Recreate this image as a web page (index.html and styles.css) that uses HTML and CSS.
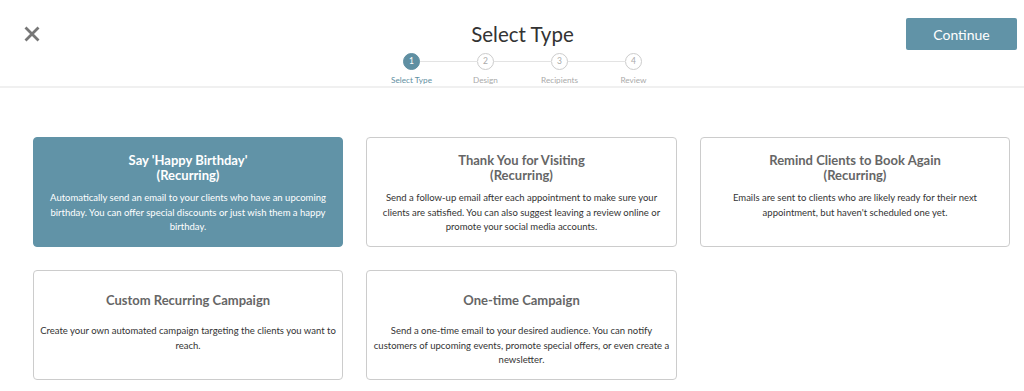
FILE: index.html
```html
<!DOCTYPE html>
<html>
   <head>
      <meta charset="UTF-8">
      <meta name="viewport" content="width=device-width, initial-scale=1.0"/>
      <title>Select Type</title>
      <link rel="stylesheet" href="styles.css">
   </head>
   <body>
      <header class="top-bar">
         <button class="close-button" aria-label="Close">
            <svg width="16" height="16" viewBox="0 0 16 16">
               <path d="M1.5 1.5 L14.5 14.5 M14.5 1.5 L1.5 14.5" stroke="#777" stroke-width="2.8" stroke-linecap="butt"/>
            </svg>
         </button>

         <div class="title-block">
            <h1>Select Type</h1>
            <ol class="steps">
               <li class="step active"><span class="step-num">1</span><span class="step-label">Select Type</span></li>
               <li class="step"><span class="step-num">2</span><span class="step-label">Design</span></li>
               <li class="step"><span class="step-num">3</span><span class="step-label">Recipients</span></li>
               <li class="step"><span class="step-num">4</span><span class="step-label">Review</span></li>
            </ol>
         </div>

         <button class="continue-button">Continue</button>
      </header>

      <main class="type-grid">
         <div class="type-card selected">
            <h2>Say 'Happy Birthday'<br>(Recurring)</h2>
            <p>Automatically send an email to your clients who have an upcoming<br>birthday. You can offer special discounts or just wish them a happy<br>birthday.</p>
         </div>
         <div class="type-card">
            <h2>Thank You for Visiting<br>(Recurring)</h2>
            <p>Send a follow-up email after each appointment to make sure your<br>clients are satisfied. You can also suggest leaving a review online or<br>promote your social media accounts.</p>
         </div>
         <div class="type-card">
            <h2>Remind Clients to Book Again<br>(Recurring)</h2>
            <p>Emails are sent to clients who are likely ready for their next<br>appointment, but haven't scheduled one yet.</p>
         </div>
         <div class="type-card single">
            <h2>Custom Recurring Campaign</h2>
            <p>Create your own automated campaign targeting the clients you want to<br>reach.</p>
         </div>
         <div class="type-card single">
            <h2>One-time Campaign</h2>
            <p>Send a one-time email to your desired audience. You can notify<br>customers of upcoming events, promote special offers, or even create a<br>newsletter.</p>
         </div>
      </main>
   </body>
</html>
```

FILE: styles.css
```css
*
{
   box-sizing: border-box;
}

body
{
   margin: 0;
   font-family: Lato, "Open Sans", sans-serif;
   color: #333333;
   background: #ffffff;
}

.top-bar
{
   display: grid;
   grid-template-columns: 1fr auto 1fr;
   align-items: start;
   height: 88px;
   padding: 0 7px 0 24px;
   border-bottom: 2px solid #f0f0f0;
}

.close-button
{
   margin-top: 26px;
   padding: 0;
   border: 0;
   background: none;
   width: 16px;
   height: 16px;
}

.close-button svg
{
   display: block;
}

.title-block
{
   display: flex;
   flex-direction: column;
   align-items: center;
   transform: translateX(2px);
}

h1
{
   margin: 19px 0 0;
   font-size: 20.5px;
   font-weight: 400;
   line-height: 30px;
   color: #333333;
}

.steps
{
   display: flex;
   margin: 4px 0 0;
   padding: 0;
   list-style: none;
}

.step
{
   position: relative;
   display: flex;
   flex-direction: column;
   align-items: center;
   width: 74px;
}

.step + .step::before
{
   content: "";
   position: absolute;
   top: 8px;
   right: 45px;
   width: 58px;
   height: 1px;
   background: #e3e3e3;
}

.step-num
{
   width: 17px;
   height: 17px;
   border: 1px solid #cccccc;
   border-radius: 50%;
   font-size: 8.5px;
   line-height: 15px;
   text-align: center;
   color: #aaaaaa;
   background: #ffffff;
}

.step-label
{
   margin-top: 5px;
   font-size: 8.2px;
   color: #aaaaaa;
}

.step.active .step-num
{
   border-color: #5f8fa2;
   background: #5f8fa2;
   color: #ffffff;
}

.step.active .step-label
{
   color: #5f8fa2;
}

.continue-button
{
   justify-self: end;
   margin-top: 18px;
   width: 111px;
   height: 32px;
   border: 0;
   border-radius: 2px;
   background: #6193a7;
   color: #ffffff;
   font-family: Lato, sans-serif;
   font-size: 14px;
}

.type-grid
{
   display: grid;
   grid-template-columns: 310px 311px 310px;
   grid-auto-rows: 110px;
   gap: 23px;
   padding: 49px 0 0 33px;
}

.type-card
{
   padding: 15px 3px 0;
   border: 1px solid #cccccc;
   border-radius: 4px;
   text-align: center;
}

.type-card h2
{
   height: 29px;
   margin: 0 0 9px;
   font-size: 13px;
   font-weight: 700;
   line-height: 14.5px;
   color: #666666;
}

.type-card.single h2
{
   line-height: 29px;
}

.type-card p
{
   margin: 0;
   font-size: 9.5px;
   line-height: 14.5px;
   color: #333333;
}

.type-card.selected
{
   border-color: #6193a7;
   background: #6193a7;
}

.type-card.selected h2,
.type-card.selected p
{
   color: #ffffff;
}
```
